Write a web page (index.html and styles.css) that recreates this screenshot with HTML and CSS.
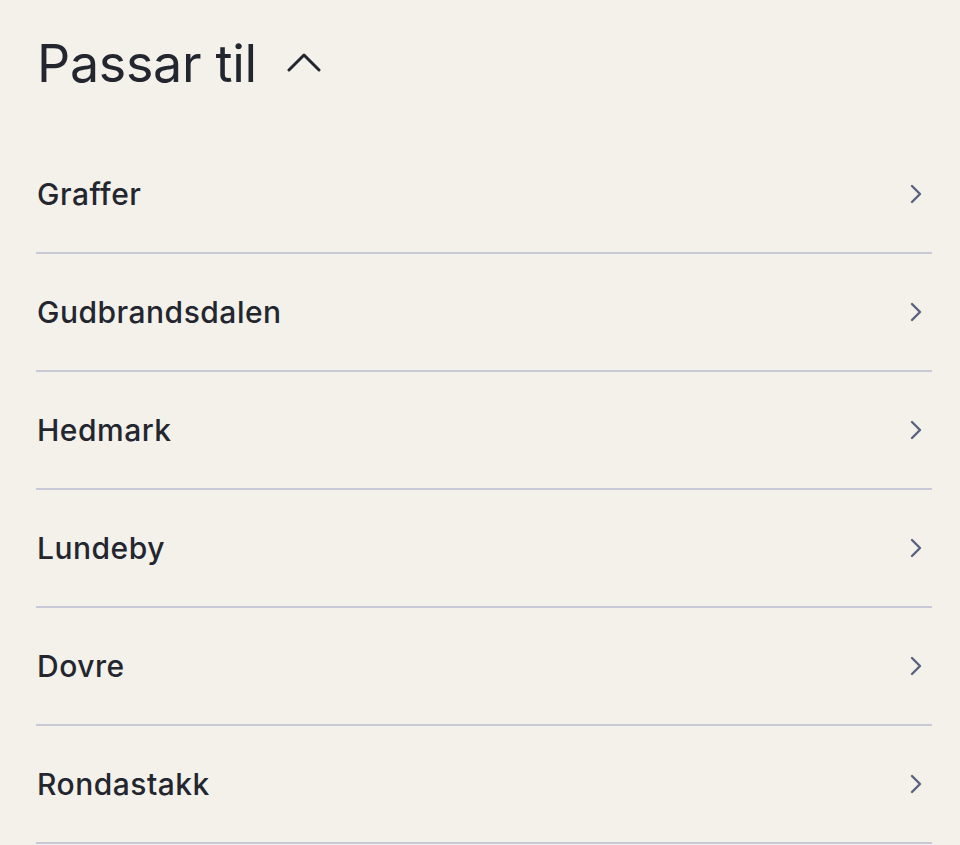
FILE: index.html
```html
<!DOCTYPE html>
<html lang="no">
<head>
<meta charset="utf-8">
<link rel="stylesheet" href="styles.css">
</head>
<body>
<main class="panel">
  <header class="head">
    <h1 class="title">Passar til</h1>
    <svg class="up" width="34" height="20" viewBox="0 0 34 20"><polyline points="2,18 17,3 32,18" fill="none" stroke="#23262f" stroke-width="3" stroke-linecap="round" stroke-linejoin="round"/></svg>
  </header>
  <ul class="list">
    <li class="row"><span>Graffer</span><svg class="chev" width="14" height="22" viewBox="0 0 14 22"><polyline points="3,3 11,11 3,19" fill="none" stroke="#5a6182" stroke-width="2.4" stroke-linecap="round" stroke-linejoin="round"/></svg></li>
    <li class="row"><span>Gudbrandsdalen</span><svg class="chev" width="14" height="22" viewBox="0 0 14 22"><polyline points="3,3 11,11 3,19" fill="none" stroke="#5a6182" stroke-width="2.4" stroke-linecap="round" stroke-linejoin="round"/></svg></li>
    <li class="row"><span>Hedmark</span><svg class="chev" width="14" height="22" viewBox="0 0 14 22"><polyline points="3,3 11,11 3,19" fill="none" stroke="#5a6182" stroke-width="2.4" stroke-linecap="round" stroke-linejoin="round"/></svg></li>
    <li class="row"><span>Lundeby</span><svg class="chev" width="14" height="22" viewBox="0 0 14 22"><polyline points="3,3 11,11 3,19" fill="none" stroke="#5a6182" stroke-width="2.4" stroke-linecap="round" stroke-linejoin="round"/></svg></li>
    <li class="row"><span>Dovre</span><svg class="chev" width="14" height="22" viewBox="0 0 14 22"><polyline points="3,3 11,11 3,19" fill="none" stroke="#5a6182" stroke-width="2.4" stroke-linecap="round" stroke-linejoin="round"/></svg></li>
    <li class="row"><span>Rondastakk</span><svg class="chev" width="14" height="22" viewBox="0 0 14 22"><polyline points="3,3 11,11 3,19" fill="none" stroke="#5a6182" stroke-width="2.4" stroke-linecap="round" stroke-linejoin="round"/></svg></li>
  </ul>
</main>
</body>
</html>
```
FILE: styles.css
```css
html, body {
  margin: 0;
  padding: 0;
  background: #f3f1ea;
}
body {
  font-family: Inter, "Noto Sans", sans-serif;
  color: #23262f;
}
.panel {
  padding: 0 28px 0 36px;
}
.head {
  display: flex;
  align-items: center;
  gap: 30px;
  height: 136px;
  padding-bottom: 8px;
  box-sizing: border-box;
}
.title {
  margin: 0 0 0 1px;
  font-size: 52px;
  font-weight: 400;
  letter-spacing: -0.3px;
  line-height: 1;
}
.up {
  display: block;
  margin-top: -4px;
}
.list {
  list-style: none;
  margin: 0;
  padding: 0;
}
.row {
  display: flex;
  align-items: center;
  justify-content: space-between;
  height: 116px;
  border-bottom: 2px solid #c7c9d6;
  padding: 0 9px 0 1px;
  font-size: 30px;
  font-weight: 500;
  letter-spacing: 0.5px;
}
.chev {
  display: block;
}
```
